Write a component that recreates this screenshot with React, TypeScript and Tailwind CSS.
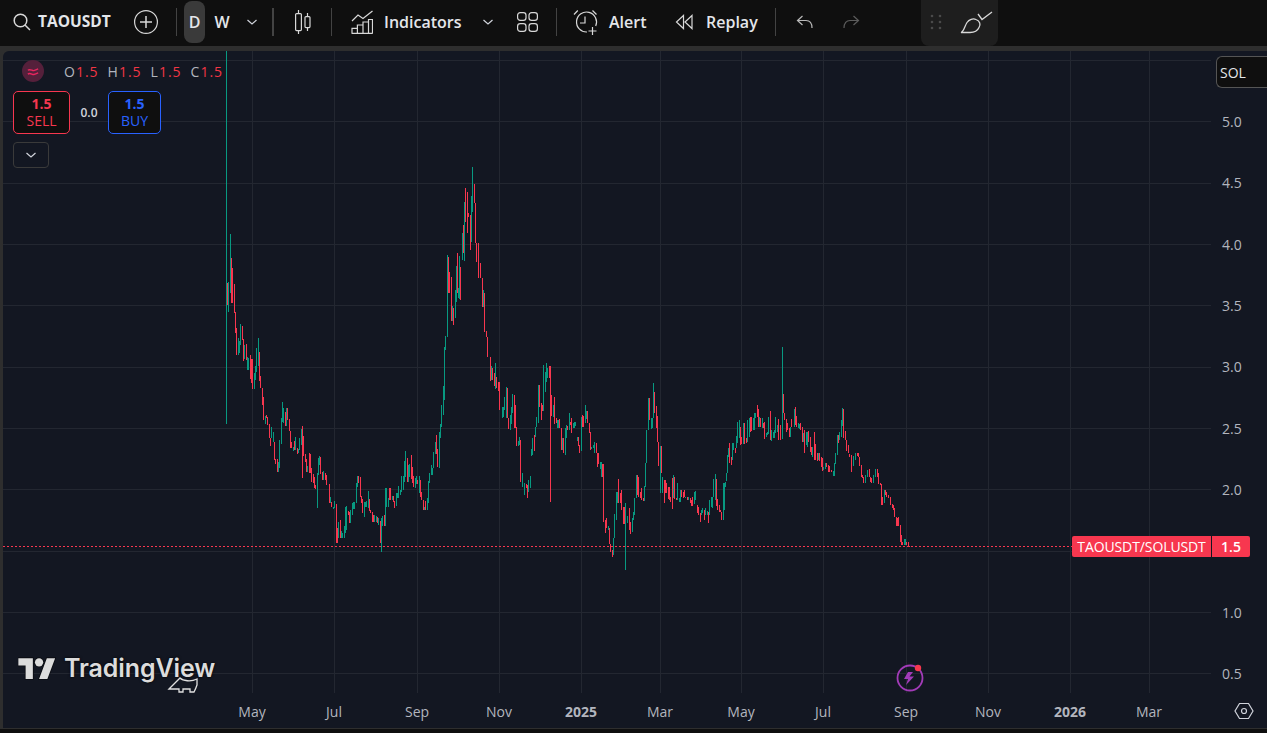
type Bar = [number, number, number, number];

// traced bars: [x, top, bottom, up] in 3x crop coordinates
const leftBars: Bar[] = [
  [52,250,315,0],[55,245,335,1],[61,102,278,1],[64,175,308,0],[67,205,308,0],[73,252,340,0],[76,335,400,0],[79,385,465,0],
  [85,415,465,1],[88,422,458,1],[91,372,435,1],[97,378,420,0],[100,418,483,0],[103,435,478,1],[109,432,480,0],[112,470,510,1],
  [115,475,510,1],[121,465,538,0],[124,478,550,0],[127,478,567,0],[133,518,567,1],[136,498,540,1],[139,445,515,1],[145,415,498,1],
  [148,456,543,0],[151,528,563,0],[157,565,615,0],[160,590,660,0],[166,648,672,1],[169,645,655,0],[172,650,675,0],[178,672,715,0],
  [181,715,738,0],[184,682,715,1],[190,695,725,1],[193,725,780,0],[196,778,792,0],[202,778,815,0],[205,785,815,1],[208,720,805,1],
  [214,655,732,1],[217,605,665,1],[220,625,668,1],[226,635,678,0],[229,625,678,1],[232,625,660,0],[238,657,692,0],[241,692,743,0],
  [244,725,743,0],[250,742,752,1],[253,722,750,0],[256,712,750,1],[262,745,762,0],[265,748,760,1],[268,715,750,1],[274,687,735,1],
  [277,678,833,0],[280,708,768,0],[286,762,785,0],[289,778,815,0],[292,797,815,1],[298,760,818,0],[301,762,820,0],[304,805,845,0],
  [310,822,850,0],[313,830,865,0],[316,855,868,0],[322,820,923,1],[325,775,825,1],[328,768,795,1],[331,770,822,0],[337,815,840,0],
  [340,812,840,1],[346,820,840,0],[349,825,855,0],[358,852,908,0],[361,890,910,1],[364,905,922,0],[370,920,926,1],[373,903,925,1],
  [379,912,1030,0],[382,985,1028,0],[385,965,1015,1],[391,960,1015,0],[394,992,1015,1],[397,1000,1015,1],[403,978,1015,1],[406,920,1000,1],
  [409,918,990,1],[415,932,945,0],[418,935,968,0],[421,930,968,1],[427,910,945,1],[430,905,928,1],[433,905,928,1],[439,848,908,1],
  [442,828,860,1],[445,828,850,0],[451,832,892,0],[454,888,908,0],[457,897,938,0],[463,905,950,1],[466,905,922,1],[469,903,922,1],
  [475,873,925,1],[478,897,933,0],[481,930,940,0],[487,936,966,0],[490,945,965,0],[493,945,965,1],[499,948,965,1],[502,952,970,0],
  [505,955,975,1],[511,963,1030,0],[514,955,1055,1],[517,948,978,1],[523,945,978,0],[526,865,978,1],[529,865,920,1],[535,895,920,1],
  [538,865,900,0],[541,865,900,0],[547,888,900,1],[550,888,905,0],[553,902,925,0],[559,880,918,1],[562,880,895,1],[565,858,895,1],
  [571,870,885,1],[574,828,875,1],[580,828,870,1],[583,783,845,1],[586,753,830,1],[592,773,845,0],[595,795,845,1],[598,793,830,1],
  [604,765,838,0],[607,800,850,0],[610,828,860,0],[616,835,865,1],[619,828,852,1],[622,840,852,0],[628,828,878,1],[631,840,892,0],
  [634,875,900,0],[640,900,930,0],[643,920,930,1],[646,903,930,0],[652,893,930,1],[655,843,910,1],[658,820,850,1],[664,795,825,1],
  [667,803,825,1],[670,755,805,1],[676,725,762,1],[679,705,762,0],[682,747,800,0],[688,695,805,1],[691,672,715,1],[694,615,680,1],
  [700,558,645,1],[703,440,600,1],[706,408,450,1],[712,165,412,1],[715,170,280,0],[718,215,280,0],[724,230,362,0],[727,318,362,1],
  [730,325,375,0],[736,270,355,1],[739,197,305,1],[742,160,280,0],[745,265,295,1],[748,168,298,1],[751,200,300,0],
  [805,128,235,0],[811,190,235,0],[817,235,320,0],[820,270,320,1],[823,280,395,0],[829,393,412,0],[832,412,470,0],[841,472,542,0],
  [844,498,540,1],[847,505,540,0],[853,518,558,0],[856,490,568,1],[859,530,565,0],[865,547,572,0],[868,547,630,0],[877,620,653,1],
  [880,620,650,1],[883,592,630,1],[889,562,655,1],[892,565,655,0],[895,655,687,0],[901,645,690,1],[904,622,672,1],[907,582,640,1],
  [913,585,685,0],[916,615,685,0],[919,680,738,0],[925,722,738,1],[928,712,735,1],[931,720,845,0],
];

// the peak, already in page pixels
const peakBars: Bar[] = [
  [462,233,260,1],[463,225,253,0],[464,202,261,1],[465,188,222,0],[467,192,233,0],[468,213,217,0],[470,215,250,0],[471,196,242,1],
  [472,167,212,1],[474,184,203,0],[475,203,243,0],[476,243,262,0],
];

const rightBars: Bar[] = [
  [7,400,440,1],[13,430,465,1],[19,432,445,0],[22,435,475,0],[25,420,455,1],[31,408,445,1],[34,328,348,1],[37,295,345,1],
  [43,285,332,0],[46,262,290,1],[49,232,262,1],[55,135,250,1],[58,135,200,0],[64,190,240,0],[67,195,212,0],[70,75,212,1],
  [76,95,155,1],[79,70,125,1],[82,85,115,1],[88,78,115,0],[91,78,485,0],[94,165,228,0],[100,195,230,1],[103,172,252,0],
  [109,235,250,0],[112,240,265,1],[115,240,265,1],[118,238,265,0],[124,265,330,0],[127,295,330,1],[130,295,338,0],[136,265,345,1],
  [139,255,295,1],[142,258,270,0],[148,220,270,1],[151,245,255,0],[154,235,280,0],[160,250,265,1],[163,245,265,1],[166,245,258,1],
  [172,292,303,1],[175,292,318,0],[178,315,338,0],[184,230,332,1],[187,225,262,0],[190,228,262,0],[196,195,250,1],[199,212,238,1],
  [202,212,250,0],[208,248,278,0],[211,275,330,0],[214,320,328,1],[220,315,325,1],[223,307,340,1],[229,310,340,0],[232,340,380,0],
  [235,340,372,0],[241,365,388,1],[244,365,412,1],[247,372,412,0],[250,372,545,0],[256,540,578,0],[259,533,565,0],[265,558,570,1],
  [268,565,612,0],[271,612,635,0],[277,630,650,0],[280,595,645,1],[283,522,595,1],[289,455,540,1],[292,455,490,1],[295,418,488,0],
  [301,458,490,0],[304,450,510,0],[310,500,552,0],[313,500,552,0],[316,490,690,1],[322,528,550,1],[328,505,570,0],[331,545,582,0],
  [337,535,575,1],[340,515,540,1],[343,473,525,1],[349,405,475,1],[352,405,465,0],[355,412,472,0],[361,455,475,0],[364,445,480,0],
  [370,475,483,0],[373,438,482,1],[376,370,440,1],[379,270,370,1],[385,175,270,1],[388,175,240,0],[394,235,268,1],[397,235,265,1],
  [400,130,235,1],[403,155,220,0],[409,198,265,0],[412,228,305,0],[415,305,378,0],[421,318,458,1],[424,318,400,0],[427,410,458,1],
  [433,420,490,0],[436,420,458,0],[439,430,458,0],[445,440,478,0],[448,440,480,0],[451,470,485,0],[457,415,506,0],[460,405,475,1],
  [463,410,478,0],[469,475,480,0],[472,430,480,1],[478,475,486,1],[481,450,486,1],[484,450,470,0],[490,455,475,0],[493,450,472,0],
  [496,472,475,1],[502,470,480,0],[505,470,480,1],[511,475,490,0],[514,480,497,0],[517,470,497,0],[523,455,492,1],[526,453,480,1],
  [532,495,520,0],[535,500,525,0],[541,520,545,0],[544,510,525,1],[547,505,520,1],[553,510,540,0],[556,505,525,1],[562,512,525,1],
  [565,515,550,0],[568,480,525,1],[574,470,502,1],[577,470,505,1],[580,418,470,1],[586,403,480,1],[589,418,498,0],[592,478,510,0],
  [598,495,515,0],[601,510,515,0],[604,515,540,0],[610,430,540,1],[613,430,510,1],[616,425,440,1],[619,398,422,1],[622,345,398,1],
  [625,325,350,1],[628,310,370,0],[634,350,375,0],[637,310,360,1],[640,308,330,1],[646,325,340,0],[649,288,325,1],[652,245,310,1],
  [658,240,295,1],[661,262,315,0],[664,290,312,0],[670,250,312,1],[673,250,312,0],[679,295,310,0],[682,240,305,1],[688,235,290,1],
  [691,230,275,0],[694,230,272,0],[700,235,270,1],[703,220,270,1],[706,218,235,1],[712,195,232,0],[715,208,260,0],[718,232,260,1],
  [721,235,262,0],[727,235,265,1],[730,248,265,0],[733,245,298,0],[739,278,290,1],[742,275,285,1],[745,232,282,1],[751,212,300,0],
  [754,270,302,1],[760,275,295,1],[763,270,295,1],[766,230,280,1],[772,255,275,1],[775,238,300,0],[781,255,300,0],[787,22,298,1],
  [790,163,220,0],[793,218,240,0],[799,238,275,0],[802,250,270,0],[808,265,290,0],[811,262,290,1],[814,238,262,0],[823,208,262,1],
  [826,202,255,0],[829,228,262,0],[835,250,265,1],[838,252,267,1],[841,250,270,0],[847,262,305,0],[850,280,305,1],[853,270,340,0],
  [859,275,315,1],[862,275,320,1],[865,272,305,0],[871,292,335,0],[874,320,345,0],[877,320,350,1],[883,275,360,0],[886,312,360,0],
  [892,340,362,0],[895,340,360,1],[898,340,362,0],[904,352,380,0],[907,355,392,0],[910,380,390,1],[916,368,388,1],[919,370,380,0],
  [925,375,395,0],[928,378,395,0],[934,390,395,0],[940,392,408,1],[943,368,408,1],[946,340,372,1],[952,285,345,1],[955,285,310,0],
  [958,275,300,1],[964,240,292,1],[967,205,258,1],[970,208,295,0],[976,272,300,0],[979,300,332,0],[985,315,340,0],[988,342,350,0],
  [994,345,395,0],[1000,348,378,1],[1006,340,360,1],[1012,338,348,0],[1015,340,350,0],[1018,350,378,0],[1024,375,412,0],[1027,405,415,0],
  [1030,410,430,0],[1036,405,430,1],[1042,390,412,1],[1048,388,412,0],[1051,410,425,0],[1054,415,430,0],[1060,405,430,1],[1066,388,410,1],
  [1072,388,410,0],[1075,400,432,0],[1081,428,435,0],[1084,432,495,0],[1087,470,495,0],[1093,450,490,1],[1096,450,465,0],[1099,455,470,0],
  [1105,465,475,0],[1111,470,495,0],[1117,492,505,0],[1120,495,510,0],[1123,505,530,0],[1129,530,558,0],[1132,535,558,0],[1135,530,558,0],
  [1141,555,605,0],[1144,585,615,0],[1147,605,615,0],[1153,598,615,1],[1156,598,615,1],[1159,605,615,0],[1165,605,622,0],[1168,618,622,0],
];

const bars: Bar[] = [
  [226, 51, 424, 1],
  ...leftBars.map(([x, t, b, u]): Bar => [Math.floor(210 + x / 3), 200 + t / 3, 200 + b / 3, u]),
  ...peakBars,
  ...rightBars.map(([x, t, b, u]): Bar => [Math.floor(520 + x / 3), 340 + t / 3, 340 + b / 3, u]),
];

const gridY = [60, 121, 183, 244, 305, 367, 428, 489, 551, 612, 673];
const gridX = [252, 334, 417, 499, 581, 660, 741, 823, 906, 988, 1070, 1149];
const prices = ["5.0", "4.5", "4.0", "3.5", "3.0", "2.5", "2.0", "", "1.0", "0.5"];
const months = ["May", "Jul", "Sep", "Nov", "2025", "Mar", "May", "Jul", "Sep", "Nov", "2026", "Mar"];

const Separator = ({ className }: { className: string }) => (
  <div className={`w-px h-[28px] bg-[#434343] ${className}`} />
);

const Chevron = ({ className }: { className: string }) => (
  <svg viewBox="0 0 12 12" className={`w-[12px] h-[12px] ${className}`} fill="none" stroke="#d1d4dc" strokeWidth="1.2">
    <path d="M1.5 4 6 8l4.5-4" />
  </svg>
);

const Toolbar = () => (
  <div className="h-[46px] flex items-center pl-[13px] pb-[2px] bg-[#0f0f0f] text-[#e4e6ea] text-[16px] font-semibold">
    <svg viewBox="0 0 18 18" className="w-[18px] h-[18px]" fill="none" stroke="#d8d8d8" strokeWidth="1.5">
      <circle cx="7.5" cy="7.5" r="6.3" />
      <path d="m12 12 5 5" />
    </svg>
    <span className="ml-[7px] w-[73px] text-[15.5px] font-bold whitespace-nowrap">TAOUSDT</span>
    <svg viewBox="0 0 24 24" className="ml-[23px] w-[24px] h-[24px]" fill="none" stroke="#d8d8d8" strokeWidth="1.2">
      <circle cx="12" cy="12" r="11.4" />
      <path d="M12 6v12M6 12h12" strokeWidth="1.5" />
    </svg>
    <Separator className="ml-[18px]" />
    <div className="ml-[7px] w-[21px] h-[42px] rounded-lg bg-[#3a3a3a] flex items-center justify-center">D</div>
    <div className="ml-[7px] w-[20px] text-center">W</div>
    <Chevron className="ml-[14px]" />
    <div className="ml-[14px] w-[2px] h-[28px] bg-[#434343]" />
    <svg viewBox="0 0 20 26" className="ml-[19px] w-[20px] h-[26px]" fill="none" stroke="#d8d8d8" strokeWidth="1.2">
      <path d="M5.5 1v3.5M5.5 21.5V25M14.5 4v3.5M14.5 18.5V22" />
      <rect x="2.6" y="4.6" width="5.8" height="17" rx="1" />
      <rect x="12" y="7.6" width="5" height="11" rx="1" />
    </svg>
    <Separator className="ml-[18px]" />
    <svg viewBox="0 0 22 24" className="ml-[19px] w-[22px] h-[24px]" fill="none" stroke="#d8d8d8" strokeWidth="1.2">
      <path d="m1 11 6-6 5 3.5L21.5 1" />
      <path d="M.6 23.4h21M1 23.4v-5h5.4v5M6.4 23.4V15H12v8.4M12 23.4V12h5.5v11.4M17.5 23.4V9.5h4v13.9" />
    </svg>
    <span className="ml-[11px] w-[77px] whitespace-nowrap">Indicators</span>
    <Chevron className="ml-[21px]" />
    <svg viewBox="0 0 21 20" className="ml-[23px] w-[21px] h-[20px]" fill="none" stroke="#d8d8d8" strokeWidth="1.2">
      <rect x=".6" y=".6" width="8.4" height="7.8" rx="2.6" />
      <rect x="12" y=".6" width="8.4" height="7.8" rx="2.6" />
      <rect x=".6" y="11.6" width="8.4" height="7.8" rx="2.6" />
      <rect x="12" y="11.6" width="8.4" height="7.8" rx="2.6" />
    </svg>
    <Separator className="ml-[18px]" />
    <svg viewBox="0 0 26 26" className="ml-[16px] w-[26px] h-[26px]" fill="none" stroke="#d8d8d8" strokeWidth="1.2">
      <path d="M14 23a10 10 0 1 1 8.7-6" />
      <path d="M12 7.5V14H7M1 5.5 4.8 1.5M19.5 1.5l4 4M19.5 18v8M15.500 22h8" />
    </svg>
    <span className="ml-[10px] w-[38px]">Alert</span>
    <svg viewBox="0 0 19 16" className="ml-[28px] w-[19px] h-[16px]" fill="none" stroke="#d8d8d8" strokeWidth="1.2">
      <path d="M8.500 1.500 1.500 8l7 6.500zM17 1.500 10 8l7 6.500z" />
    </svg>
    <span className="ml-[12px] w-[52px]">Replay</span>
    <Separator className="ml-[17px]" />
    <svg viewBox="0 0 17 14" className="ml-[20px] w-[17px] h-[14px]" fill="none" stroke="#b9b9b9" strokeWidth="1.2">
      <path d="M6.500 1 1.500 5.500 6.500 10M1.500 5.500h8.500c3.500 0 6 2.500 6 7.500" />
    </svg>
    <svg viewBox="0 0 17 14" className="ml-[30px] w-[17px] h-[14px]" fill="none" stroke="#5c5c5c" strokeWidth="1.2">
      <path d="M10.500 1l5 4.500-5 4.500M15.500 5.500H7c-3.500 0-6 2.500-6 7.500" />
    </svg>
    <div className="ml-[61px] w-[77px] h-[46px] self-start rounded-b-lg bg-[#1e1e1e] flex items-center pl-[9px] pb-[2px]">
      <svg viewBox="0 0 12 16" className="w-[12px] h-[16px]" fill="#4a4a4a">
        <circle cx="2" cy="2" r="1.300" /><circle cx="10" cy="2" r="1.300" />
        <circle cx="2" cy="8" r="1.300" /><circle cx="10" cy="8" r="1.300" />
        <circle cx="2" cy="14" r="1.300" /><circle cx="10" cy="14" r="1.300" />
      </svg>
      <svg viewBox="0 0 33 23" className="ml-[18px] w-[33px] h-[23px] mt-[1px]" fill="none" stroke="#d8d8d8" strokeWidth="1.3">
        <path d="M1 21.500c3-1 3.500-6 6-10 2-3 6-4.500 9-3 4 1.500 5 5 3 8-1.500 3.500-5.500 5-9 5z" />
        <path d="M18 3l4 5.500L32 1" />
      </svg>
    </div>
  </div>
);

const Legend = () => (
  <div className="absolute left-[10px] top-[9px] text-[14px]">
    <div className="flex items-center h-[22px] pl-[9px]">
      <div className="w-[22px] h-[22px] rounded-full bg-[#55203b] flex items-center justify-center">
        <svg viewBox="0 0 14 10" className="w-[12px] h-[9px]" fill="none" stroke="#e9265f" strokeWidth="1.6">
          <path d="M1 3.500c3-2 5 1 7 .5s3-1 5-2M1 8c3-2 5 1 7 .5s3-1 5-2" />
        </svg>
      </div>
      <div className="ml-[20px] flex gap-[9px] text-[#b2b5be] tracking-[1px]">
        <span>O<span className="text-[#f23645]">1.5</span></span>
        <span>H<span className="text-[#f23645]">1.5</span></span>
        <span>L<span className="text-[#f23645]">1.5</span></span>
        <span>C<span className="text-[#f23645]">1.5</span></span>
      </div>
    </div>
    <div className="mt-[9px] flex items-center">
      <div className="w-[57px] h-[43px] pb-[2px] rounded-[5px] border border-[#f7374f] bg-[#0f0f0f] flex flex-col items-center justify-center leading-[17px] text-[#f7374f]">
        <span className="font-bold">1.5</span>
        <span className="text-[14px]">SELL</span>
      </div>
      <span className="w-[38px] text-center text-[12px] font-semibold text-[#d1d4dc]">0.0</span>
      <div className="w-[53px] h-[43px] pb-[2px] rounded-[5px] border border-[#2962ff] bg-[#0f0f0f] flex flex-col items-center justify-center leading-[17px] text-[#2962ff]">
        <span className="font-bold">1.5</span>
        <span className="text-[14px]">BUY</span>
      </div>
    </div>
    <div className="mt-[8px] w-[36px] h-[26px] rounded-[4px] border border-[#3a3a3a] flex items-center justify-center">
      <Chevron className="" />
    </div>
  </div>
);

const Logo = () => (
  <div className="absolute left-[15px] top-[601px] flex items-center h-[30px]">
    <svg viewBox="0 0 36 28" className="w-[38px] h-[29px]" fill="#dcdcdc" stroke="#0b0d12" strokeWidth="1.600" paintOrder="stroke">
      <path d="M14 25H7V12H0V5h14zM28 25h-8l7.500-20h8z" />
      <circle cx="20" cy="9" r="4" />
    </svg>
    <span className="ml-[8px] mt-[1px] font-['Inter'] text-[25px] leading-[30px] font-semibold tracking-[-0.1px] text-[#dcdcdc] [text-shadow:0_0_3px_#000]">TradingView</span>
  </div>
);

const Chart = () => (
  <div className="flex-1 flex flex-col min-h-0">
    <div className="relative flex flex-1 min-h-0 rounded-tl-md bg-[#131722]">
      <div className="relative w-[1208px]">
        <svg viewBox="3 51 1208 642" className="block w-[1208px] h-[642px]" shapeRendering="crispEdges">
          {gridY.map((y) => (
            <line key={y} x1="3" x2="1211" y1={y + 0.5} y2={y + 0.5} stroke="#232731" />
          ))}
          {gridX.map((x) => (
            <line key={x} x1={x + 0.5} x2={x + 0.5} y1="51" y2="693" stroke="#232731" />
          ))}
          <line x1="3" x2="1072" y1="546.500" y2="546.500" stroke="#f7374f" strokeDasharray="2 2" />
          {bars.map(([x, top, bottom, up], i) => (
            <rect key={i} x={x} y={top} width="1" height={bottom - top} fill={up ? "#089981" : "#f7374f"} />
          ))}
        </svg>
        <Legend />
        <Logo />
        <svg viewBox="0 0 30 30" className="absolute left-[892px] top-[611px] w-[30px] h-[30px]" fill="none">
          <circle cx="15" cy="16" r="12.500" stroke="#a23bb8" strokeWidth="1.800" />
          <path d="M18 10h-5l-4 7h4l-2 6 8-8.500h-4.500z" fill="#a23bb8" />
          <circle cx="23" cy="6" r="3.200" fill="#f7374f" />
        </svg>
        <svg viewBox="0 0 36 20" className="absolute left-[164px] top-[624px] w-[36px] h-[20px]" fill="none" stroke="#e0e0e0" strokeWidth="1.300">
          <path d="M2 14 13 3c3 3 11 4 17 1v6c-1 3-2 5-3 7h-4v-3h-7v3h-4v-3z" />
        </svg>
      </div>
      <div className="flex-1 flex flex-col pt-[40px] text-[14px] text-[#b2b5be]">
        {prices.map((p, i) => (
          <div key={i} className="h-[61.3px] shrink-0 flex items-center pl-[11px]">{p}</div>
        ))}
      </div>
      <div className="absolute right-0 top-[5px] w-[51px] h-[32px] rounded-l-md border border-r-0 border-[#555] bg-[#0f0f0f] flex items-center pl-[3px] text-[14px] text-[#e4e6ea]">
        SOL
      </div>
      <div className="absolute left-[1069px] top-[485px] h-[21px] flex text-[14px] text-white">
        <div className="w-[139px] rounded-l-[2px] bg-[#f7374f] flex items-center justify-center whitespace-nowrap tracking-[-0.1px]">TAOUSDT/SOLUSDT</div>
        <div className="ml-px w-[38px] rounded-r-[2px] bg-[#f7374f] flex items-center justify-center font-semibold">1.5</div>
      </div>
    </div>
    <div className="h-[35px] shrink-0 flex items-center bg-[#131722] pl-[249px] pt-[1px] text-[14px] text-[#b2b5be]">
      <div className="grid grid-cols-[82px_83px_82px_82px_79px_81px_82px_83px_82px_82px_79px_60px]">
        {months.map((m, i) => (
          <div key={i} className="w-0 flex justify-center whitespace-nowrap">
            <span className={m.length === 4 ? "font-bold" : ""}>{m}</span>
          </div>
        ))}
      </div>
      <svg viewBox="0 0 20 18" className="ml-[25px] w-[20px] h-[18px]" fill="none" stroke="#d1d4dc" strokeWidth="1.200">
        <path d="M5.500 1.500h9L19 9l-4.500 7.500h-9L1 9z" />
        <circle cx="10" cy="9" r="2.500" />
      </svg>
    </div>
  </div>
);

export default function App() {
  return (
    <div className="w-[1267px] h-[733px] flex flex-col overflow-hidden bg-[#2e2e2e] font-['Open_Sans',sans-serif]">
      <Toolbar />
      <div className="h-[5px] bg-[#2e2e2e]" />
      <div className="flex-1 flex min-h-0 pl-[3px]">
        <Chart />
      </div>
      <div className="h-[5px] border-t border-[#2e2e2e] bg-[#0f0f0f]" />
    </div>
  );
}
